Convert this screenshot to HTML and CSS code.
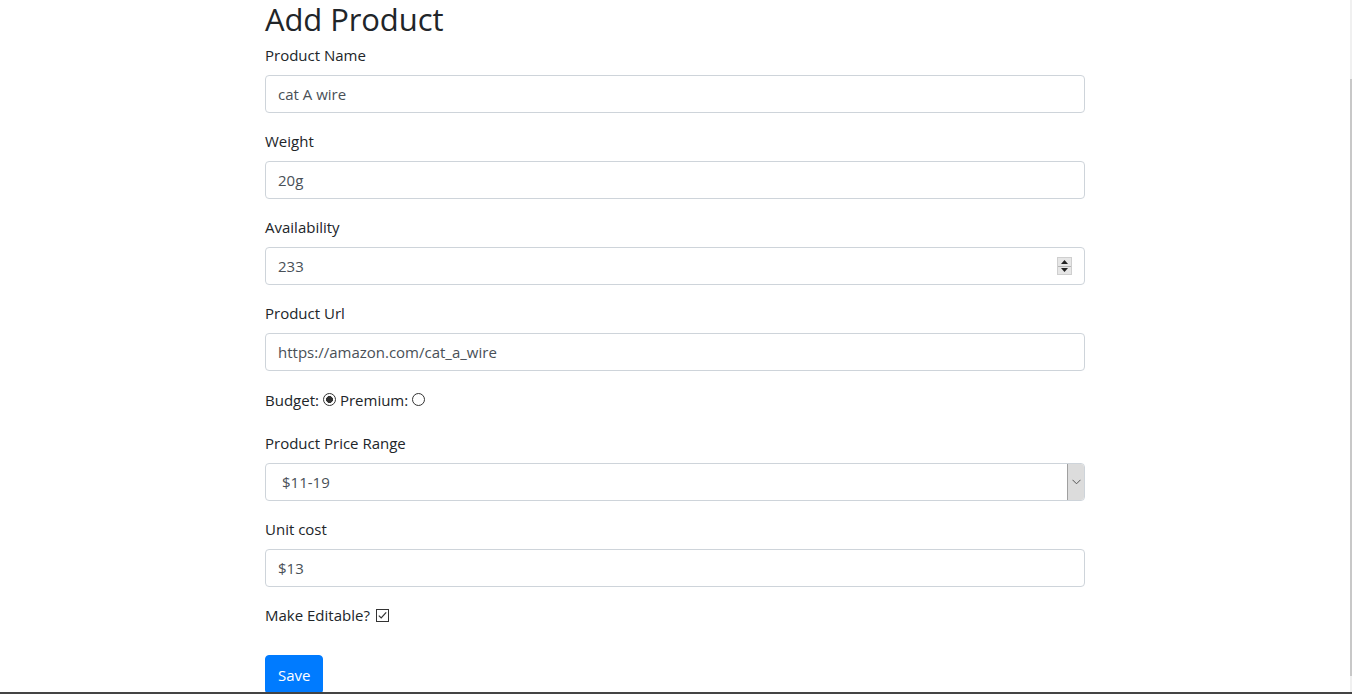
FILE: index.html
```html
<!DOCTYPE html>
<html lang="en">
<head>
<meta charset="utf-8">
<title>Add Product</title>
<link rel="stylesheet" href="styles.css">
</head>
<body>
<main class="container">
  <h2 class="title">Add Product</h2>
  <form class="form">
    <div class="group">
      <label class="label">Product Name</label>
      <input class="control" type="text" value="cat A wire">
    </div>
    <div class="group">
      <label class="label">Weight</label>
      <input class="control" type="text" value="20g">
    </div>
    <div class="group">
      <label class="label">Availability</label>
      <div class="number-wrap">
        <input class="control" type="text" value="233">
        <span class="spinner">
          <span class="spin-btn"><svg width="7" height="4" viewBox="0 0 7 4"><path d="M3.5 0L7 4H0z" fill="#222"/></svg></span>
          <span class="spin-btn"><svg width="7" height="4" viewBox="0 0 7 4"><path d="M0 0h7L3.5 4z" fill="#222"/></svg></span>
        </span>
      </div>
    </div>
    <div class="group">
      <label class="label">Product Url</label>
      <input class="control" type="text" value="https://amazon.com/cat_a_wire">
    </div>
    <div class="group radios">
      <span>Budget:</span>
      <input class="radio" type="radio" name="tier" checked>
      <span>Premium:</span>
      <input class="radio" type="radio" name="tier">
    </div>
    <div class="group">
      <label class="label">Product Price Range</label>
      <div class="select-wrap">
        <span class="select-value">$11-19</span>
        <span class="select-btn"><svg width="9" height="6" viewBox="0 0 9 6"><path d="M0.5 0.8L4.5 4.8L8.5 0.8" fill="none" stroke="#555" stroke-width="1"/></svg></span>
      </div>
    </div>
    <div class="group">
      <label class="label">Unit cost</label>
      <input class="control" type="text" value="$13">
    </div>
    <div class="group check-row">
      <span>Make Editable?</span>
      <span class="checkbox"><svg width="13" height="13" viewBox="0 0 13 13"><rect x="0.5" y="0.5" width="12" height="12" fill="#fff" stroke="#333"/><path d="M2.8 6.6L5.2 9L10.2 3.4" fill="none" stroke="#333" stroke-width="1.2"/></svg></span>
    </div>
    <button class="btn" type="button">Save</button>
  </form>
</main>
<div class="scrollbar"><div class="thumb"></div></div>
<div class="bottom-edge"></div>
</body>
</html>
```

FILE: styles.css
```css
* { box-sizing: border-box; }
html, body { margin: 0; padding: 0; }
body {
  font-family: "Open Sans", "Noto Sans", "Liberation Sans", sans-serif;
  font-size: 15px;
  line-height: 24px;
  color: #212529;
  background: #fff;
  height: 694px;
  overflow: hidden;
  padding-right: 2px;
}
.container {
  width: 820px;
  margin: 0 auto;
}
.title {
  font-size: 31px;
  font-weight: 400;
  line-height: 38px;
  margin: 0 0 5px;
  letter-spacing: -0.1px;
}
.group { margin-bottom: 16px; }
.label {
  display: block;
  margin-bottom: 8px;
}
.control {
  display: block;
  width: 100%;
  height: 38px;
  padding: 6px 12px;
  font: inherit;
  color: #495057;
  border: 1px solid #ced4da;
  border-radius: 4px;
  background: #fff;
}
.number-wrap { position: relative; }
.spinner {
  position: absolute;
  top: 10px;
  right: 13px;
  width: 15px;
  height: 18px;
  display: flex;
  flex-direction: column;
  background: #e6e6e6;
  border: 1px solid #cfcfcf;
}
.spin-btn {
  flex: 1;
  display: flex;
  align-items: center;
  justify-content: center;
}
.spin-btn + .spin-btn { border-top: 1px solid #b5b5b5; }
.radios {
  display: flex;
  align-items: center;
  height: 29px;
  margin-top: -2px;
  margin-bottom: 17px;
}
.radio {
  appearance: none;
  -webkit-appearance: none;
  width: 13px;
  height: 13px;
  margin: 0 4px;
  border: 1px solid #333;
  border-radius: 50%;
  background: #fff;
  display: inline-block;
}
.radio:checked {
  background: radial-gradient(circle, #333 0 3.2px, #fff 3.7px);
}
.select-wrap {
  display: flex;
  height: 38px;
  border: 1px solid #ced4da;
  border-radius: 4px;
  overflow: hidden;
}
.select-value {
  flex: 1;
  padding: 6px 16px;
  color: #495057;
}
.select-btn {
  width: 18px;
  display: flex;
  align-items: center;
  justify-content: center;
  background: #dcdcdc;
  border: 1px solid #a0a0a0;
  margin: -1px -1px -1px 0;
}
.check-row {
  display: flex;
  align-items: center;
  margin-bottom: 28px;
}
.checkbox {
  display: inline-flex;
  margin-left: 6px;
}
.btn {
  font: inherit;
  color: #fff;
  background: #007bff;
  border: 1px solid #007bff;
  border-radius: 4px;
  padding: 6px 12px;
  line-height: 24px;
  height: 39px;
}
.scrollbar {
  position: fixed;
  top: 0;
  right: 0;
  width: 2px;
  height: 100%;
  background: #f0f0f0;
}
.thumb {
  margin-top: 79px;
  height: 597px;
  background: #c8c8c8;
}
.bottom-edge {
  position: fixed;
  left: 0;
  bottom: 0;
  width: 100%;
  height: 2px;
  background: #444;
}
```
